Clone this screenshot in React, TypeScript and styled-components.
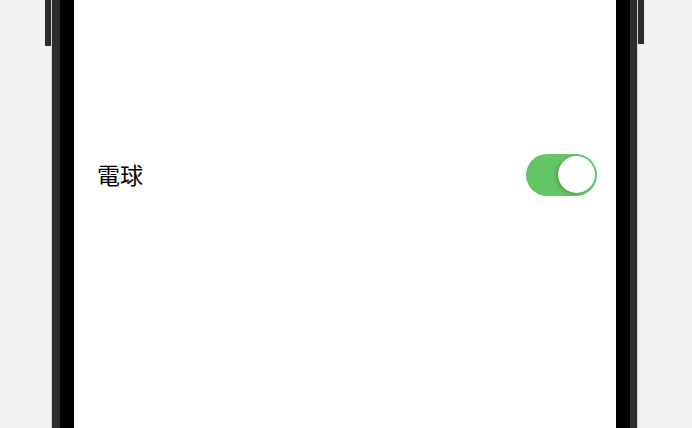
import React, { useState } from 'react';
import styled, { createGlobalStyle } from 'styled-components';

const GlobalStyle = createGlobalStyle`
  html, body {
    margin: 0;
    padding: 0;
    background: #f2f2f2;
  }
`;

const Page = styled.div`
  width: 692px;
  height: 428px;
  overflow: hidden;
  display: flex;
  justify-content: center;
  padding-right: 3px;
  box-sizing: border-box;
  background: #f2f2f2;
`;

const Phone = styled.div`
  position: relative;
  flex: none;
  width: 585px;
  height: 520px;
  margin-top: -40px;
  box-sizing: border-box;
  background: #2d2d2d;
  padding: 0 7px 0 8px;
  display: flex;
  box-shadow: -1px 0 1px rgba(0, 0, 0, 0.12), 1px 0 1px rgba(0, 0, 0, 0.12);
`;

const Bezel = styled.div`
  flex: 1;
  display: flex;
  background: #000;
  padding: 0 14px;
`;

const Screen = styled.div`
  flex: 1;
  background: #fff;
  padding: 193px 19px 0 23px;
  font-family: 'Noto Sans CJK JP', 'Noto Sans', sans-serif;
`;

const SideButton = styled.div<{ side: 'left' | 'right' }>`
  position: absolute;
  top: 0;
  width: 6px;
  height: ${(p) => (p.side === 'left' ? 86 : 84)}px;
  background: #2d2d2d;
  border-radius: 1px;
  ${(p) => (p.side === 'left' ? 'left: -7px;' : 'right: -7px;')}
  box-shadow: 0 0 1px rgba(0, 0, 0, 0.3);
`;

const Row = styled.div`
  display: flex;
  align-items: center;
  justify-content: space-between;
  height: 43px;
`;

const Label = styled.span`
  font-size: 23px;
  color: #000;
  line-height: 1;
`;

const Track = styled.button<{ on: boolean }>`
  width: 71px;
  height: 42px;
  border-radius: 21px;
  border: none;
  padding: 2.5px;
  display: flex;
  justify-content: ${(p) => (p.on ? 'flex-end' : 'flex-start')};
  align-items: center;
  background: ${(p) => (p.on ? '#65c466' : '#e9e9ea')};
  cursor: pointer;
  box-sizing: border-box;
`;

const Knob = styled.span`
  width: 37px;
  height: 37px;
  border-radius: 50%;
  background: #fff;
  box-shadow: -2px 1px 3px rgba(0, 60, 0, 0.25);
`;

export default function App() {
  const [on, setOn] = useState(true);
  return (
    <Page>
      <GlobalStyle />
      <Phone>
        <SideButton side="left" />
        <SideButton side="right" />
        <Bezel>
          <Screen>
            <Row>
              <Label>電球</Label>
              <Track on={on} onClick={() => setOn(!on)}>
                <Knob />
              </Track>
            </Row>
          </Screen>
        </Bezel>
      </Phone>
    </Page>
  );
}
